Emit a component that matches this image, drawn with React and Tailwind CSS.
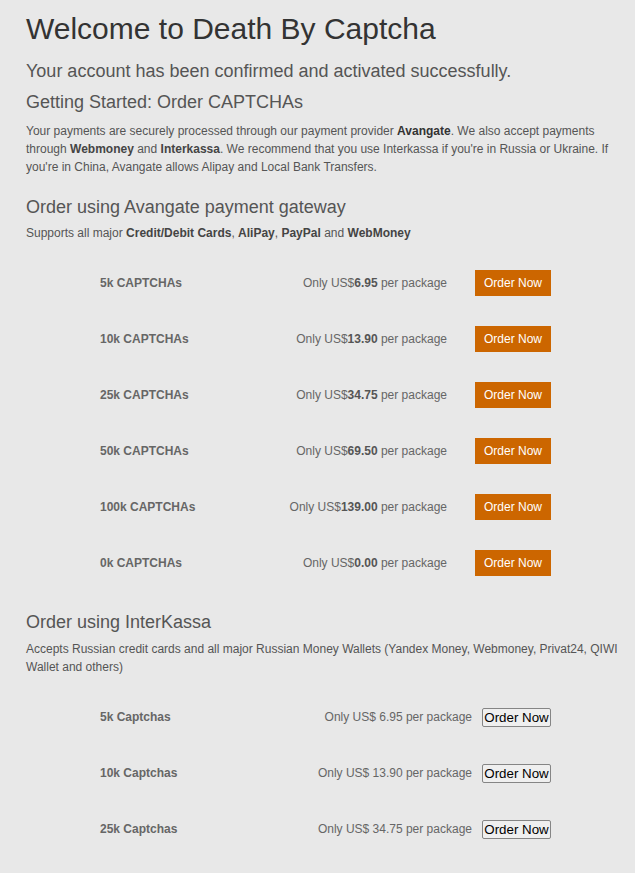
export default function App() {
  const av = [
    ["5k CAPTCHAs", "6.95"],
    ["10k CAPTCHAs", "13.90"],
    ["25k CAPTCHAs", "34.75"],
    ["50k CAPTCHAs", "69.50"],
    ["100k CAPTCHAs", "139.00"],
    ["0k CAPTCHAs", "0.00"],
  ];
  const ik = [
    ["5k Captchas", "6.95"],
    ["10k Captchas", "13.90"],
    ["25k Captchas", "34.75"],
  ];
  return (
    <div className="min-h-[873px] bg-[#e8e8e8] pl-[26px] pr-[10px] pb-[20px] text-[#555] font-['Liberation_Sans',Arial,sans-serif]">
      <h1 className="pt-[12px] text-[30px] leading-[33px] text-[#333]">Welcome to Death By Captcha</h1>
      <div className="mt-[16px] text-[18px] leading-[20px] text-[#555]">Your account has been confirmed and activated successfully.</div>
      <div className="mt-[11px] text-[18px] leading-[20px] text-[#555]">Getting Started: Order CAPTCHAs</div>
      <p className="mt-[10px] text-[12px] leading-[18px]">
        Your payments are securely processed through our payment provider <b className="text-[#333]">Avangate</b>. We also accept payments through <b className="text-[#444]">Webmoney</b> and <b className="text-[#444]">Interkassa</b>. We recommend that you use Interkassa if you're in Russia or Ukraine. If you're in China, Avangate allows Alipay and Local Bank Transfers.
      </p>
      <div className="mt-[21px] text-[18px] leading-[20px]">Order using Avangate payment gateway</div>
      <p className="mt-[7px] text-[12px] leading-[18px]">
        Supports all major <b className="text-[#444]">Credit/Debit Cards</b>, <b className="text-[#444]">AliPay</b>, <b className="text-[#444]">PayPal</b> and <b className="text-[#444]">WebMoney</b>
      </p>
      <div className="mt-[13px] ml-[74px] w-[451px]">
        {av.map(([l, p]) => (
          <div key={l} className="flex h-[56px] items-center text-[12px]">
            <div className="flex-1 font-bold text-[#666]">{l}</div>
            <div className="text-[#666]">Only US$<b className="text-[#555]">{p}</b> per package</div>
            <button className="ml-[28px] h-[26px] w-[76px] bg-[#cc6600] text-[12px] text-white">Order Now</button>
          </div>
        ))}
      </div>
      <div className="mt-[21px] text-[18px] leading-[20px]">Order using InterKassa</div>
      <p className="mt-[8px] text-[12px] leading-[18px]">
        Accepts Russian credit cards and all major Russian Money Wallets (Yandex Money, Webmoney, Privat24, QIWI Wallet and others)
      </p>
      <div className="mt-[13px] ml-[74px] w-[451px]">
        {ik.map(([l, p]) => (
          <div key={l} className="flex h-[56px] items-center text-[12px]">
            <div className="flex-1 font-bold text-[#666]">{l}</div>
            <div className="text-[#666]">Only US$ {p} per package</div>
            <button className="ml-[10px] flex h-[19px] w-[69px] items-center justify-center rounded-[2px] border border-[#858585] bg-[#efefef] p-0 text-[13.33px] leading-[15px] text-black">Order Now</button>
          </div>
        ))}
      </div>
    </div>
  );
}
